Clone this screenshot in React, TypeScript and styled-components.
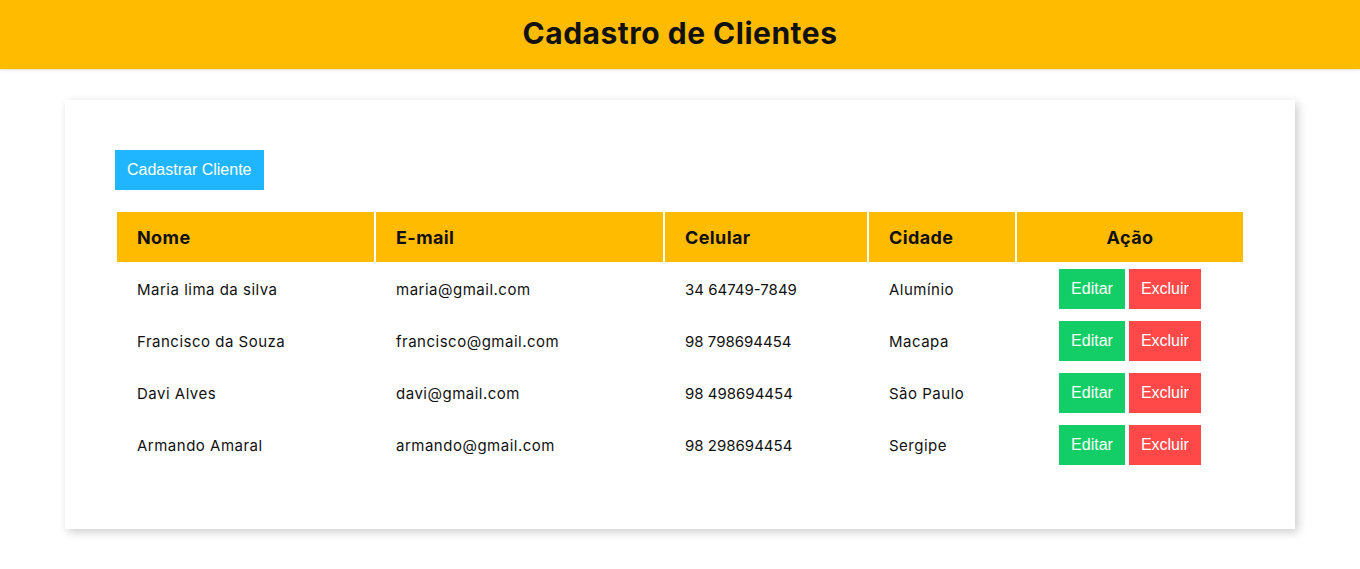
import React from "react";
import styled, { createGlobalStyle } from "styled-components";

const Global = createGlobalStyle`
  html, body { margin: 0; padding: 0; background: #fff; }
  body { font-family: "Inter", "Noto Sans", sans-serif; color: #111; }
`;

const Header = styled.header`
  height: 70px;
  background: #ffbb00;
  border-bottom: 1px solid #f0e6cc;
  box-shadow: 0 1px 3px rgba(0, 0, 0, 0.06);
  display: flex;
  align-items: center;
  justify-content: center;
  padding-bottom: 4px;
  box-sizing: border-box;
`;

const Title = styled.h1`
  margin: 0;
  font-size: 30px;
  font-weight: 700;
  letter-spacing: 0.5px;
  color: #111;
`;

const Main = styled.main`
  padding: 30px 65px 40px;
`;

const Card = styled.section`
  background: #fff;
  padding: 50px 50px 57px;
  box-shadow: 3px 3px 9px rgba(0, 0, 0, 0.2);
`;

const PrimaryButton = styled.button`
  height: 40px;
  padding: 0 12px;
  border: none;
  background: #20b6ff;
  color: #fff;
  font-family: "Liberation Sans", Arial, sans-serif;
  font-size: 16px;
  cursor: pointer;
`;

const Table = styled.table`
  width: 100%;
  margin-top: 20px;
  border-spacing: 2px;
  border-collapse: separate;
`;

const Th = styled.th<{ $center?: boolean; $w: number }>`
  width: ${(p) => p.$w}px;
  height: 50px;
  background: #ffbb00;
  text-align: ${(p) => (p.$center ? "center" : "left")};
  padding: 0 20px;
  font-size: 18px;
  font-weight: 700;
  letter-spacing: 0.4px;
  box-sizing: border-box;
`;

const Td = styled.td<{ $center?: boolean; $numeric?: boolean }>`
  height: 50px;
  padding: 0 20px;
  font-size: 15px;
  letter-spacing: ${(p) => (p.$numeric ? "0" : "0.5px")};
  text-align: ${(p) => (p.$center ? "center" : "left")};
`;

const Actions = styled.div`
  display: flex;
  justify-content: center;
  gap: 4px;
`;

const ActionButton = styled.button<{ $variant: "edit" | "delete" }>`
  height: 40px;
  padding: 0 12px;
  border: none;
  color: #fff;
  font-family: "Liberation Sans", Arial, sans-serif;
  font-size: 16px;
  letter-spacing: 0;
  background: ${(p) => (p.$variant === "edit" ? "#13ce66" : "#ff4949")};
  cursor: pointer;
`;

const clients = [
  { nome: "Maria lima da silva", email: "maria@gmail.com", celular: "34 64749-7849", cidade: "Alumínio" },
  { nome: "Francisco da Souza", email: "francisco@gmail.com", celular: "98 798694454", cidade: "Macapa" },
  { nome: "Davi Alves", email: "davi@gmail.com", celular: "98 498694454", cidade: "São Paulo" },
  { nome: "Armando Amaral", email: "armando@gmail.com", celular: "98 298694454", cidade: "Sergipe" },
];

export default function App() {
  return (
    <>
      <Global />
      <Header>
        <Title>Cadastro de Clientes</Title>
      </Header>
      <Main>
        <Card>
          <PrimaryButton>Cadastrar Cliente</PrimaryButton>
          <Table>
            <thead>
              <tr>
                <Th $w={257}>Nome</Th>
                <Th $w={287}>E-mail</Th>
                <Th $w={202}>Celular</Th>
                <Th $w={146}>Cidade</Th>
                <Th $w={226} $center>Ação</Th>
              </tr>
            </thead>
            <tbody>
              {clients.map((c) => (
                <tr key={c.email}>
                  <Td>{c.nome}</Td>
                  <Td>{c.email}</Td>
                  <Td $numeric>{c.celular}</Td>
                  <Td>{c.cidade}</Td>
                  <Td $center>
                    <Actions>
                      <ActionButton $variant="edit">Editar</ActionButton>
                      <ActionButton $variant="delete">Excluir</ActionButton>
                    </Actions>
                  </Td>
                </tr>
              ))}
            </tbody>
          </Table>
        </Card>
      </Main>
    </>
  );
}
